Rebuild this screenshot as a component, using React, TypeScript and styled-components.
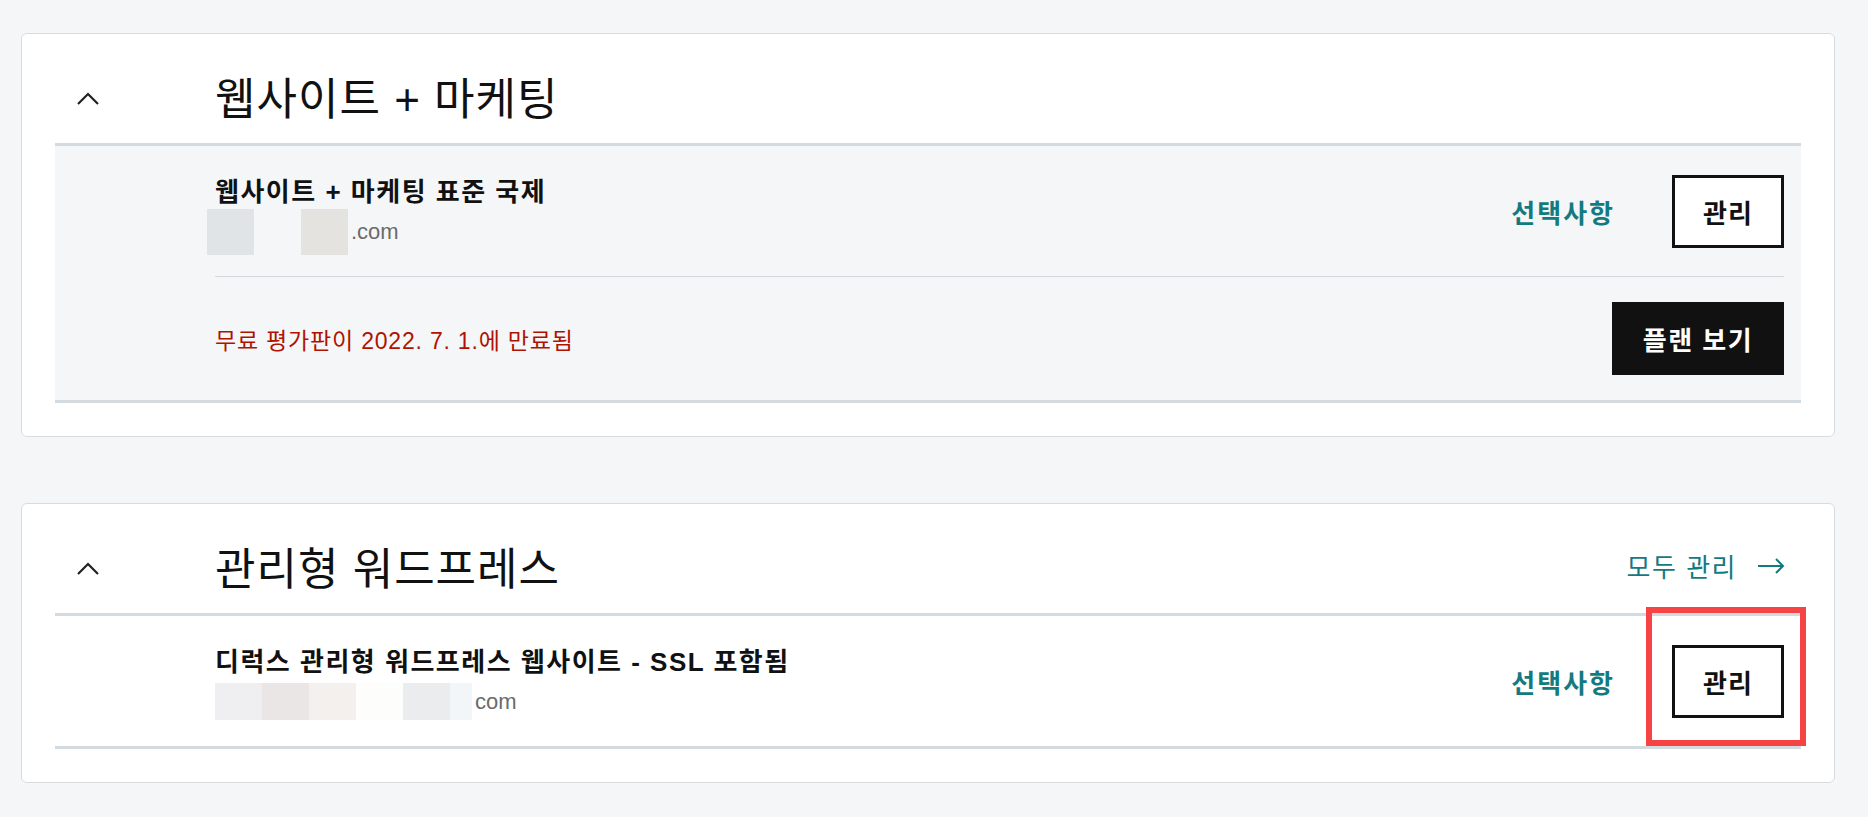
import React from "react";
import styled, { createGlobalStyle } from "styled-components";

const GlobalStyle = createGlobalStyle`
  *, *::before, *::after { box-sizing: border-box; }
  html, body { margin: 0; padding: 0; background: #f5f6f8; }
  body {
    font-family: "Liberation Sans", "Noto Sans CJK KR", sans-serif;
    color: #111111;
  }
`;

const Page = styled.div`
  display: flex;
  flex-direction: column;
  gap: 66px;
  padding: 33px 33px 33px 21px;
`;

const Card = styled.section`
  background: #ffffff;
  border: 1px solid #d8dcdf;
  border-radius: 6px;
  padding: 0 33px 33px 33px;
`;

const CardHeader = styled.header`
  height: 109px;
  padding: 24px 16px 0 22px;
  display: grid;
  grid-template-columns: 138px 1fr auto;
  align-items: center;
`;

const Toggle = styled.button`
  width: 22px;
  height: 14px;
  padding: 0;
  margin: -4px 0 0 0;
  border: 0;
  background: transparent;
  display: flex;
  align-items: center;
  justify-content: center;
  cursor: pointer;
`;

const Title = styled.h2`
  margin: 0;
  font-size: 44px;
  font-weight: 400;
  letter-spacing: 1px;
  line-height: 1.2;
  color: #111111;
`;

const ManageAll = styled.a`
  display: flex;
  align-items: center;
  gap: 20px;
  margin-bottom: 10px;
  font-size: 26px;
  font-weight: 400;
  letter-spacing: 1.5px;
  color: #137a7f;
  text-decoration: none;
  cursor: pointer;
`;

const Panel = styled.div<{ $tone: "gray" | "white" }>`
  background: ${(p) => (p.$tone === "gray" ? "#f5f6f8" : "#ffffff")};
  border-top: 3px solid #d4dbe0;
  border-bottom: 3px solid #d4dbe0;
  padding: 0 17px 0 160px;
`;

const Row = styled.div<{ $pad: string }>`
  display: flex;
  align-items: center;
  justify-content: space-between;
  padding: ${(p) => p.$pad};
`;

const Info = styled.div`
  display: flex;
  flex-direction: column;
`;

const ProductName = styled.div`
  font-size: 26px;
  font-weight: 700;
  letter-spacing: 1.5px;
  line-height: 30px;
  color: #111111;
`;

const Domain = styled.div`
  display: flex;
  align-items: center;
  height: 30px;
  margin-top: 10px;
`;

const Redact = styled.span<{ $w: number; $h: number; $c: string; $ml?: number }>`
  flex-shrink: 0;
  display: block;
  width: ${(p) => p.$w}px;
  height: ${(p) => p.$h}px;
  margin-left: ${(p) => p.$ml ?? 0}px;
  background: ${(p) => p.$c};
`;

const DomainText = styled.span`
  margin-left: 3px;
  font-family: "Liberation Sans", sans-serif;
  font-size: 22px;
  color: #6b6b6b;
`;

const Actions = styled.div`
  display: flex;
  align-items: center;
  gap: 57px;
`;

const OptionsLink = styled.a`
  font-size: 26px;
  font-weight: 700;
  letter-spacing: 2px;
  color: #137a7f;
  cursor: pointer;
`;

const ButtonWrap = styled.div`
  position: relative;
  display: flex;
`;

const Highlight = styled.span`
  position: absolute;
  left: -26px;
  right: -22px;
  top: -38px;
  bottom: -28px;
  border: 6px solid #f64444;
  pointer-events: none;
`;

const OutlineButton = styled.button`
  width: 112px;
  height: 73px;
  border: 3px solid #111111;
  background: #ffffff;
  color: #111111;
  font-family: inherit;
  font-size: 26px;
  font-weight: 700;
  letter-spacing: 1px;
  cursor: pointer;
`;

const SolidButton = styled.button`
  width: 172px;
  height: 73px;
  border: 0;
  background: #111111;
  color: #ffffff;
  font-family: inherit;
  font-size: 26px;
  font-weight: 700;
  letter-spacing: 1.5px;
  cursor: pointer;
`;

const Divider = styled.hr`
  margin: 0;
  border: 0;
  height: 1px;
  background: #d6d9dc;
`;

const Expiry = styled.div`
  font-size: 23px;
  letter-spacing: 0.8px;
  color: #ae1302;
`;

const ChevronUp = () => (
  <svg width="22" height="13" viewBox="0 0 22 13" fill="none">
    <polyline points="1,12 11,2 21,12" stroke="#222222" strokeWidth="2.2" />
  </svg>
);

const ArrowRight = () => (
  <svg width="28" height="16" viewBox="0 0 28 16" fill="none">
    <line x1="1" y1="8" x2="26" y2="8" stroke="#137a7f" strokeWidth="2" />
    <polyline points="19,1 26,8 19,15" stroke="#137a7f" strokeWidth="2" />
  </svg>
);

type Box = { w: number; c: string; ml?: number };

const DomainLine = ({ boxes, h, text }: { boxes: Box[]; h: number; text: string }) => (
  <Domain>
    {boxes.map((b, i) => (
      <Redact key={i} $w={b.w} $h={h} $c={b.c} $ml={b.ml} />
    ))}
    <DomainText>{text}</DomainText>
  </Domain>
);

export default function App() {
  return (
    <>
      <GlobalStyle />
      <Page>
        <Card>
          <CardHeader>
            <Toggle aria-label="접기">
              <ChevronUp />
            </Toggle>
            <Title>웹사이트 + 마케팅</Title>
          </CardHeader>
          <Panel $tone="gray">
            <Row $pad="29px 0 28px">
              <Info>
                <ProductName>웹사이트 + 마케팅 표준 국제</ProductName>
                <DomainLine
                  h={46}
                  text=".com"
                  boxes={[
                    { w: 47, c: "#e1e4e7", ml: -8 },
                    { w: 47, c: "transparent" },
                    { w: 47, c: "#e5e3e0" },
                  ]}
                />
              </Info>
              <Actions>
                <OptionsLink>선택사항</OptionsLink>
                <ButtonWrap>
                  <OutlineButton>관리</OutlineButton>
                </ButtonWrap>
              </Actions>
            </Row>
            <Divider />
            <Row $pad="25px 0">
              <Expiry>무료 평가판이 2022. 7. 1.에 만료됨</Expiry>
              <SolidButton>플랜 보기</SolidButton>
            </Row>
          </Panel>
        </Card>

        <Card>
          <CardHeader>
            <Toggle aria-label="접기">
              <ChevronUp />
            </Toggle>
            <Title>관리형 워드프레스</Title>
            <ManageAll>
              모두 관리
              <ArrowRight />
            </ManageAll>
          </CardHeader>
          <Panel $tone="white">
            <Row $pad="29px 0 28px">
              <Info>
                <ProductName>디럭스 관리형 워드프레스 웹사이트 - SSL 포함됨</ProductName>
                <DomainLine
                  h={37}
                  text="com"
                  boxes={[
                    { w: 47, c: "#efeef0" },
                    { w: 47, c: "#e9e6e5" },
                    { w: 47, c: "#f3f0ee" },
                    { w: 47, c: "#fdfdfc" },
                    { w: 47, c: "#ebecee" },
                    { w: 22, c: "#f2f6f9" },
                  ]}
                />
              </Info>
              <Actions>
                <OptionsLink>선택사항</OptionsLink>
                <ButtonWrap>
                  <OutlineButton>관리</OutlineButton>
                  <Highlight />
                </ButtonWrap>
              </Actions>
            </Row>
          </Panel>
        </Card>
      </Page>
    </>
  );
}
